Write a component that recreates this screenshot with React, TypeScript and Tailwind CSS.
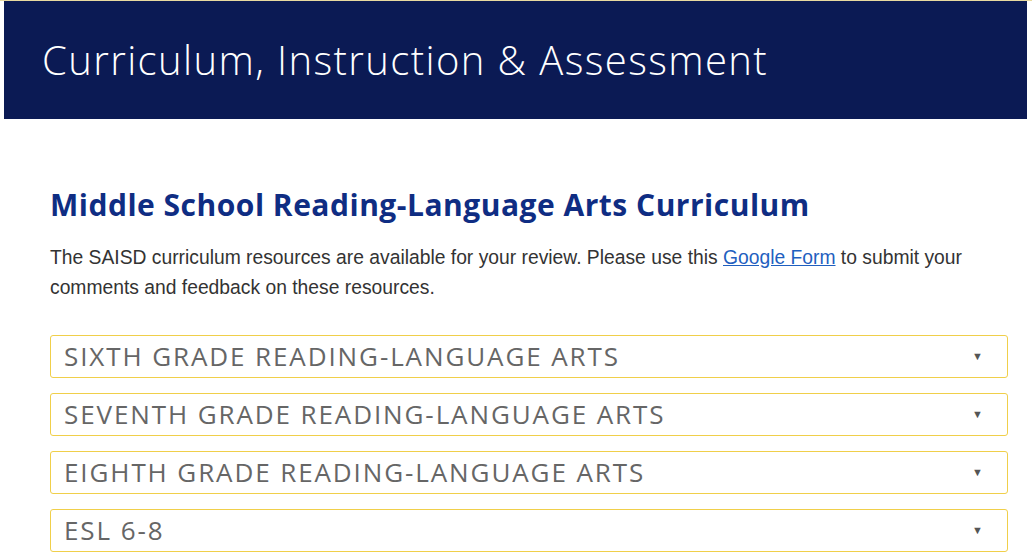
export default function App() {
  const items = [
    'Sixth Grade Reading-Language Arts',
    'Seventh Grade Reading-Language Arts',
    'Eighth Grade Reading-Language Arts',
    'ESL 6-8',
  ]

  return (
    <div className="w-[1032px] h-[557px] bg-white overflow-hidden">
      {/* Banner */}
      <div className="border-t border-[#e8d9a0] pl-1 pr-[5px]">
        <div className="bg-[#0b1a54] h-[118px] flex items-center pl-[38px]">
          <h1 className="text-white text-[40px] font-light font-['Open_Sans',sans-serif] tracking-[1.4px] -mt-[1px]">
            Curriculum, Instruction &amp; Assessment
          </h1>
        </div>
      </div>

      <div className="pl-[50px] pr-[24px] pt-[68px]">
        <h2 className="text-[#0f2d83] text-[30px] font-bold font-['Open_Sans',sans-serif] leading-[36px] tracking-[0.5px]">
          Middle School Reading-Language Arts Curriculum
        </h2>
        <p className="mt-[20px] text-[19.3px] leading-[30px] text-[#333] font-['Liberation_Sans',Arial,sans-serif]">
          The SAISD curriculum resources are available for your review. Please use this{' '}
          <a href="#" className="text-[#1f5fbf] underline">Google Form</a> to submit your comments and feedback on these resources.
        </p>

        <div className="mt-[32px] flex flex-col gap-[15px] w-[958px]">
          {items.map((label) => (
            <div
              key={label}
              className="h-[43px] border border-[#f0cf4a] rounded-[3px] flex items-center justify-between pl-[13px] pr-[24px]"
            >
              <span className="uppercase text-[26px] text-[#666] font-['Open_Sans',sans-serif] tracking-[1.9px]">
                {label}
              </span>
              <span className="text-[11px] text-[#555]">▼</span>
            </div>
          ))}
        </div>
      </div>
    </div>
  )
}
